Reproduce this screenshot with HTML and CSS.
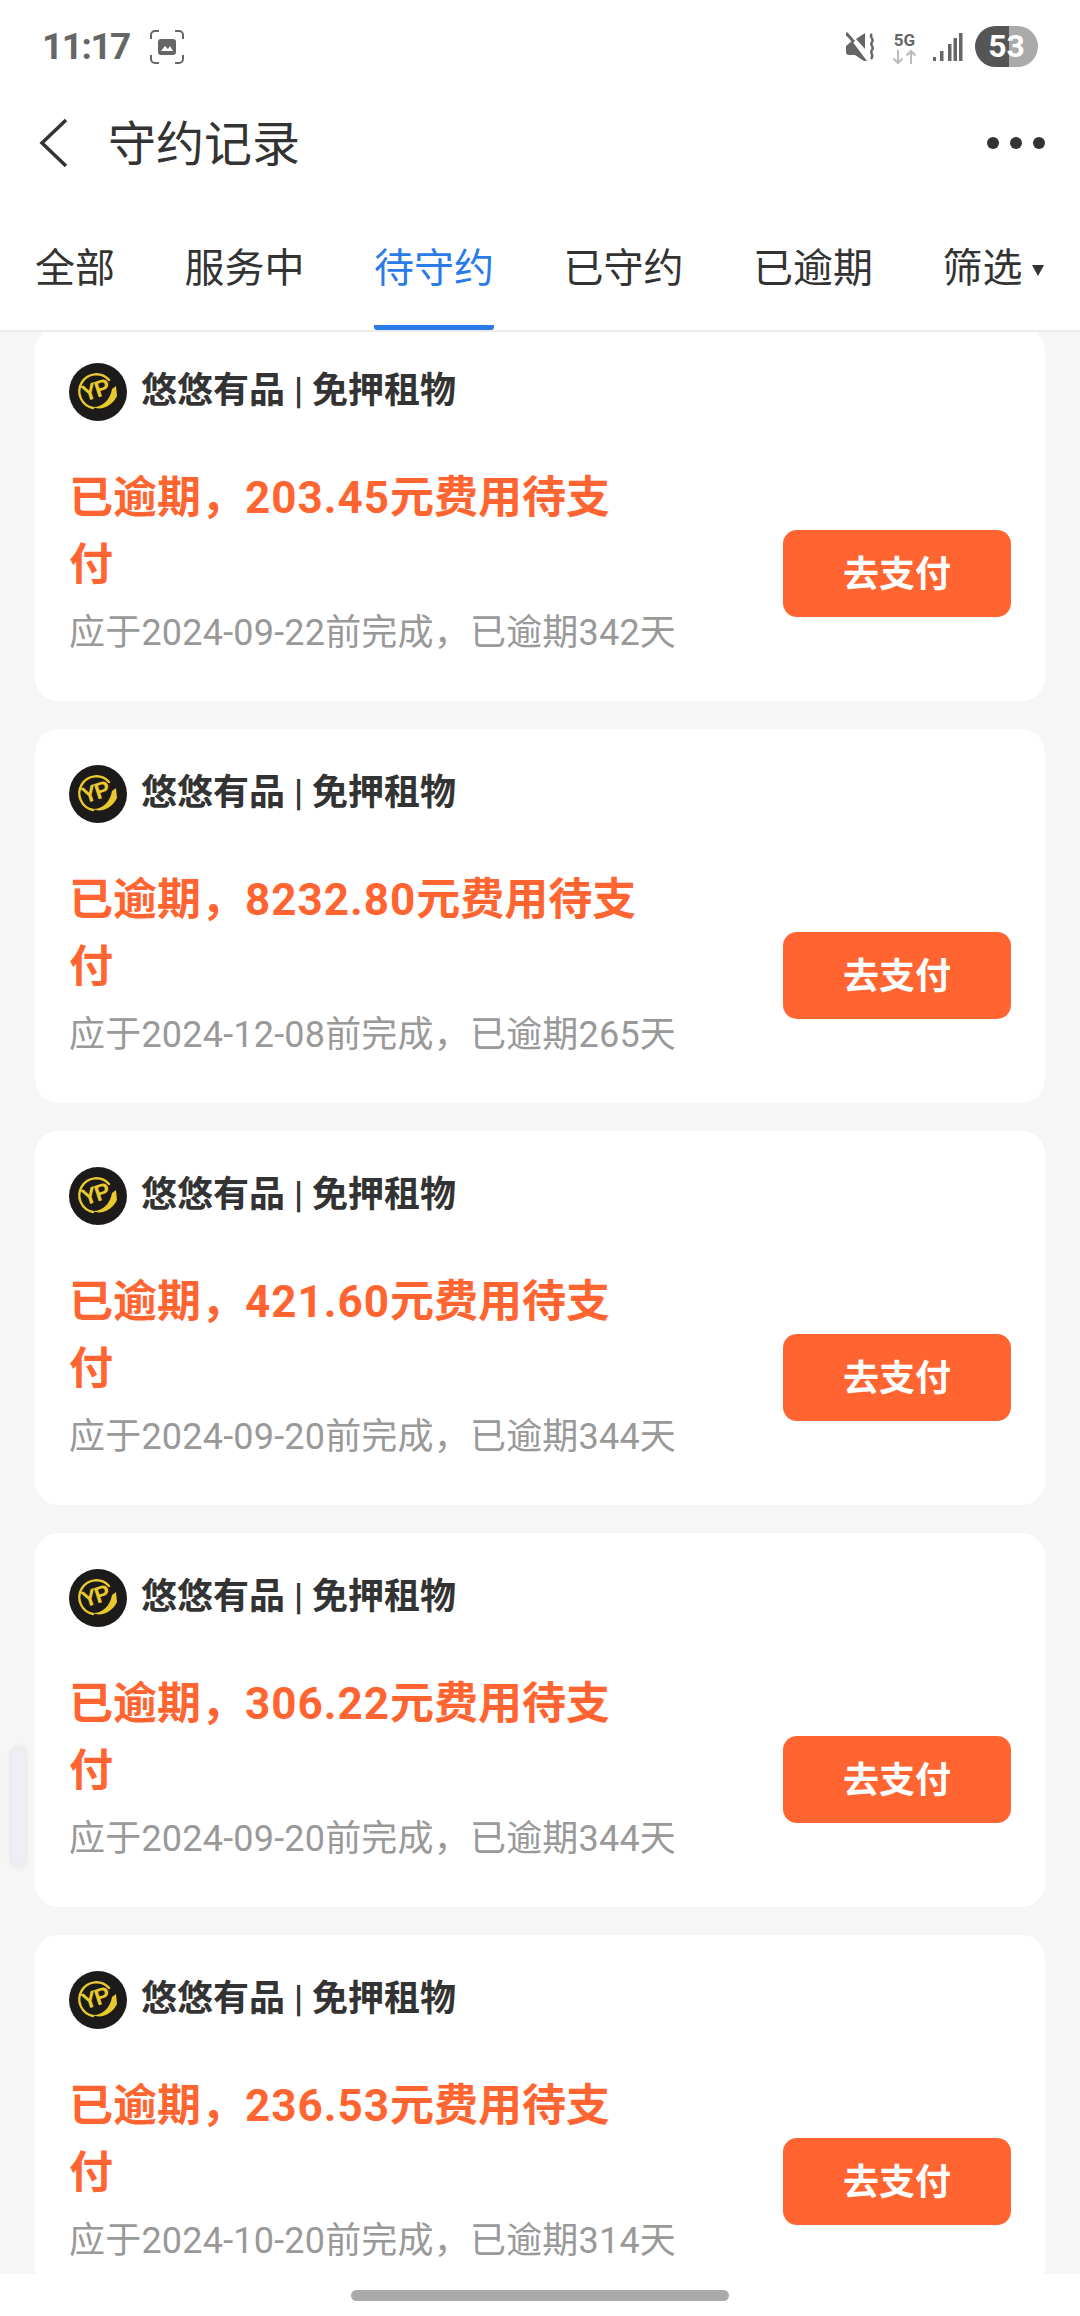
FILE: index.html
```html
<!DOCTYPE html>
<html lang="zh-CN">
<head>
    <meta charset="UTF-8">
    <meta name="viewport" content="width=device-width, initial-scale=1.0">
    <title>守约记录</title>
    <link rel="stylesheet" href="styles.css">
</head>
<body>
    <header class="top">
        <div class="status-bar">
            <div class="status-left">
                <span class="clock">11:17</span>
                <svg class="shot-icon" width="34" height="34" viewBox="0 0 34 34">
                    <path d="M1 9V5a4 4 0 0 1 4-4h4M25 1h4a4 4 0 0 1 4 4v4M33 25v4a4 4 0 0 1-4 4h-4M9 33H5a4 4 0 0 1-4-4v-4" fill="none" stroke="#666" stroke-width="2"/>
                    <rect x="8" y="9" width="18" height="16" rx="3" fill="#666"/>
                    <path d="M11 21l4-5 3 3 2-3 3 5z" fill="#fff"/>
                </svg>
            </div>
            <div class="status-right">
                <svg width="30" height="30" viewBox="0 0 30 30">
                    <path d="M0 14l6-5 15 20h-3l-9-6H3q-3 0-3-3z" fill="#666"/>
                    <path d="M0 1l8 9" stroke="#666" stroke-width="3"/>
                    <path d="M10 7l9-6v16z" fill="#666"/>
                    <path d="M26 2c-4 3 3 5 0 8s3 5 0 8 3 5-1 9" fill="none" stroke="#666" stroke-width="2.400"/>
                </svg>
                <div class="net">
                    <span class="net-label">5G</span>
                    <svg width="25" height="16" viewBox="0 0 25 16">
                        <path d="M6 1v13M1.500 9.500L6 14l4.500-4.500M19 15V2M14.500 6.500L19 2l4.500 4.500" fill="none" stroke="#bbb" stroke-width="2"/>
                    </svg>
                </div>
                <svg class="signal" width="30" height="30" viewBox="0 0 30 30">
                    <rect x="0" y="25" width="3" height="4" fill="#666"/>
                    <rect x="7" y="19" width="3.500" height="10" fill="#666"/>
                    <rect x="15" y="12" width="3.500" height="17" fill="#666"/>
                    <rect x="26" y="1" width="3.500" height="28" fill="#666"/>
                    <rect x="20.500" y="6" width="3.500" height="23" fill="#666"/>
                </svg>
                <div class="battery">53</div>
            </div>
        </div>

        <div class="title-bar">
            <svg class="back-icon" width="32" height="50" viewBox="0 0 32 50">
                <path d="M28 2L4 25l24 23" fill="none" stroke="#333" stroke-width="3.500"/>
            </svg>
            <h1>守约记录</h1>
            <div class="more"><i></i><i></i><i></i></div>
        </div>

        <nav class="tabs">
            <a class="tab">全部</a>
            <a class="tab">服务中</a>
            <a class="tab active">待守约</a>
            <a class="tab">已守约</a>
            <a class="tab">已逾期</a>
            <a class="tab filter">筛选<span class="caret"></span></a>
        </nav>
    </header>

    <main class="list">
        <section class="card">
            <div class="brand">
                <svg class="logo" width="58" height="58" viewBox="0 0 58 58">
                    <circle cx="29" cy="29" r="29" fill="#1d1b1a"/>
                    <path d="M40 17A17 17 0 1 0 24 45" fill="none" stroke="#e8c92e" stroke-width="2.400" stroke-linecap="round"/>
                    <path d="M23 44C32 45 41 38 43 26L47 23 48 33C43 43 33 48 23 44Z" fill="#e8c92e"/>
                    <text x="26" y="35" class="logo-text" transform="rotate(-18 26 28)">YP</text>
                </svg>
                <span class="brand-name">悠悠有品 | 免押租物</span>
            </div>
            <div class="card-body">
                <div class="info">
                    <p class="amount">已逾期，<span class="num">203.45</span>元费用待支<br>付</p>
                    <p class="due">应于2024-09-22前完成，已逾期342天</p>
                </div>
                <button class="pay"><span class="pay-label">去支付</span></button>
            </div>
        </section>

        <section class="card">
            <div class="brand">
                <svg class="logo" width="58" height="58" viewBox="0 0 58 58">
                    <circle cx="29" cy="29" r="29" fill="#1d1b1a"/>
                    <path d="M40 17A17 17 0 1 0 24 45" fill="none" stroke="#e8c92e" stroke-width="2.400" stroke-linecap="round"/>
                    <path d="M23 44C32 45 41 38 43 26L47 23 48 33C43 43 33 48 23 44Z" fill="#e8c92e"/>
                    <text x="26" y="35" class="logo-text" transform="rotate(-18 26 28)">YP</text>
                </svg>
                <span class="brand-name">悠悠有品 | 免押租物</span>
            </div>
            <div class="card-body">
                <div class="info">
                    <p class="amount">已逾期，<span class="num">8232.80</span>元费用待支<br>付</p>
                    <p class="due">应于2024-12-08前完成，已逾期265天</p>
                </div>
                <button class="pay"><span class="pay-label">去支付</span></button>
            </div>
        </section>

        <section class="card">
            <div class="brand">
                <svg class="logo" width="58" height="58" viewBox="0 0 58 58">
                    <circle cx="29" cy="29" r="29" fill="#1d1b1a"/>
                    <path d="M40 17A17 17 0 1 0 24 45" fill="none" stroke="#e8c92e" stroke-width="2.400" stroke-linecap="round"/>
                    <path d="M23 44C32 45 41 38 43 26L47 23 48 33C43 43 33 48 23 44Z" fill="#e8c92e"/>
                    <text x="26" y="35" class="logo-text" transform="rotate(-18 26 28)">YP</text>
                </svg>
                <span class="brand-name">悠悠有品 | 免押租物</span>
            </div>
            <div class="card-body">
                <div class="info">
                    <p class="amount">已逾期，<span class="num">421.60</span>元费用待支<br>付</p>
                    <p class="due">应于2024-09-20前完成，已逾期344天</p>
                </div>
                <button class="pay"><span class="pay-label">去支付</span></button>
            </div>
        </section>

        <section class="card">
            <div class="brand">
                <svg class="logo" width="58" height="58" viewBox="0 0 58 58">
                    <circle cx="29" cy="29" r="29" fill="#1d1b1a"/>
                    <path d="M40 17A17 17 0 1 0 24 45" fill="none" stroke="#e8c92e" stroke-width="2.400" stroke-linecap="round"/>
                    <path d="M23 44C32 45 41 38 43 26L47 23 48 33C43 43 33 48 23 44Z" fill="#e8c92e"/>
                    <text x="26" y="35" class="logo-text" transform="rotate(-18 26 28)">YP</text>
                </svg>
                <span class="brand-name">悠悠有品 | 免押租物</span>
            </div>
            <div class="card-body">
                <div class="info">
                    <p class="amount">已逾期，<span class="num">306.22</span>元费用待支<br>付</p>
                    <p class="due">应于2024-09-20前完成，已逾期344天</p>
                </div>
                <button class="pay"><span class="pay-label">去支付</span></button>
            </div>
        </section>

        <section class="card">
            <div class="brand">
                <svg class="logo" width="58" height="58" viewBox="0 0 58 58">
                    <circle cx="29" cy="29" r="29" fill="#1d1b1a"/>
                    <path d="M40 17A17 17 0 1 0 24 45" fill="none" stroke="#e8c92e" stroke-width="2.400" stroke-linecap="round"/>
                    <path d="M23 44C32 45 41 38 43 26L47 23 48 33C43 43 33 48 23 44Z" fill="#e8c92e"/>
                    <text x="26" y="35" class="logo-text" transform="rotate(-18 26 28)">YP</text>
                </svg>
                <span class="brand-name">悠悠有品 | 免押租物</span>
            </div>
            <div class="card-body">
                <div class="info">
                    <p class="amount">已逾期，<span class="num">236.53</span>元费用待支<br>付</p>
                    <p class="due">应于2024-10-20前完成，已逾期314天</p>
                </div>
                <button class="pay"><span class="pay-label">去支付</span></button>
            </div>
        </section>
    </main>

    <footer class="home-area"><div class="home-bar"></div></footer>

    <div class="edge-handle"></div>
</body>
</html>
```

FILE: styles.css
```css
:root {
    --bg-color: #f6f6f6;
    --text-color: #333;
    --orange: #ff6431;
    --blue: #2a7be8;
    --muted: #999;
}

* {
    margin: 0;
    padding: 0;
    box-sizing: border-box;
    font-family: Roboto, "Noto Sans CJK SC", sans-serif;
}

body {
    width: 1080px;
    height: 2316px;
    overflow: hidden;
    background-color: var(--bg-color);
    color: var(--text-color);
    display: flex;
    flex-direction: column;
}

.top {
    flex: none;
    height: 332px;
    background-color: #fff;
    border-bottom: 2px solid #ececec;
    position: relative;
    z-index: 1;
}

/* status bar */
.status-bar {
    height: 94px;
    padding: 26px 42px 0 42px;
    display: flex;
    justify-content: space-between;
    align-items: flex-start;
}

.status-left {
    display: flex;
    align-items: center;
    gap: 20px;
    height: 41px;
}

.clock {
    font-size: 37px;
    font-weight: 700;
    letter-spacing: -1.500px;
    color: #666;
}

.status-right {
    display: flex;
    align-items: center;
    gap: 16px;
    height: 41px;
}

.net {
    display: flex;
    flex-direction: column;
    align-items: center;
    margin-top: 4px;
}

.net-label {
    font-size: 17px;
    line-height: 17px;
    font-weight: 700;
    color: #666;
}

.battery {
    width: 63px;
    height: 41px;
    margin-left: -4px;
    border-radius: 21px;
    background: linear-gradient(to right, #555 54%, #aaa 54%);
    color: #fff;
    font-size: 32px;
    line-height: 41px;
    font-weight: 700;
    text-align: center;
}

/* title */
.title-bar {
    height: 98px;
    padding: 0 35px 0 38px;
    display: flex;
    align-items: center;
}

.title-bar h1 {
    font-size: 48px;
    font-weight: 400;
    margin: 0 0 6px 38px;
    flex: 1;
}

.more {
    display: flex;
    gap: 11px;
}

.more i {
    width: 12px;
    height: 12px;
    border-radius: 50%;
    background-color: var(--text-color);
}

/* tabs */
.tabs {
    height: 138px;
    padding: 0 30px 0 35px;
    display: flex;
    gap: 69.500px;
}

.tab {
    flex: none;
    white-space: nowrap;
    font-size: 40px;
    line-height: 46px;
    padding-top: 54px;
    height: 138px;
    color: #333;
}

.tab.active {
    color: var(--blue);
    border-bottom: 5px solid var(--blue);
    border-radius: 0 0 3px 3px;
}

.filter {
    display: flex;
    align-items: flex-start;
}

.caret {
    width: 0;
    height: 0;
    margin: 19px 0 0 9px;
    border-left: 6px solid transparent;
    border-right: 6px solid transparent;
    border-top: 11px solid var(--text-color);
}

/* cards */
.list {
    flex: 1;
    min-height: 0;
    overflow: hidden;
    margin-top: -5px;
    padding: 0 35px;
    display: flex;
    flex-direction: column;
    gap: 28px;
}

.card {
    flex: none;
    height: 374px;
    padding: 36px 34px 0 34px;
    background-color: #fff;
    border-radius: 24px;
}

.brand {
    display: flex;
    align-items: center;
    gap: 14px;
}

.brand-name {
    font-size: 36px;
    line-height: 46px;
    font-weight: 700;
    color: var(--text-color);
    margin-bottom: 2px;
}

.logo-text {
    font-size: 23px;
    font-weight: 700;
    fill: #e8c92e;
    text-anchor: middle;
    letter-spacing: -2px;
    font-family: "Liberation Sans Narrow", "Liberation Sans", sans-serif;
}

.card-body {
    display: flex;
    justify-content: space-between;
    align-items: flex-start;
    margin-top: 44px;
}

.info {
    width: 575px;
}

.amount {
    font-size: 44px;
    line-height: 67px;
    font-weight: 700;
    color: var(--orange);
}

.num {
    letter-spacing: 1px;
}

.due {
    width: 700px;
    font-size: 36px;
    line-height: 46px;
    letter-spacing: 0.200px;
    margin-top: 11px;
    color: var(--muted);
}

.pay {
    width: 228px;
    height: 87px;
    margin-top: 65px;
    border: none;
    border-radius: 14px;
    background-color: var(--orange);
    color: #fff;
    font-size: 36px;
    font-weight: 700;
}

.pay-label {
    display: block;
    padding-bottom: 6px;
}

/* bottom */
.home-area {
    flex: none;
    height: 42px;
    background-color: #fff;
    display: flex;
    justify-content: center;
    padding-top: 16px;
}

.home-bar {
    width: 378px;
    height: 11px;
    border-radius: 6px;
    background-color: #aaa;
}

.edge-handle {
    position: absolute;
    left: 12px;
    top: 1748px;
    width: 13px;
    height: 118px;
    border-radius: 7px;
    background-color: #eeeef6;
    box-shadow: 0 0 4px 2px #e6e6e6;
}
```
